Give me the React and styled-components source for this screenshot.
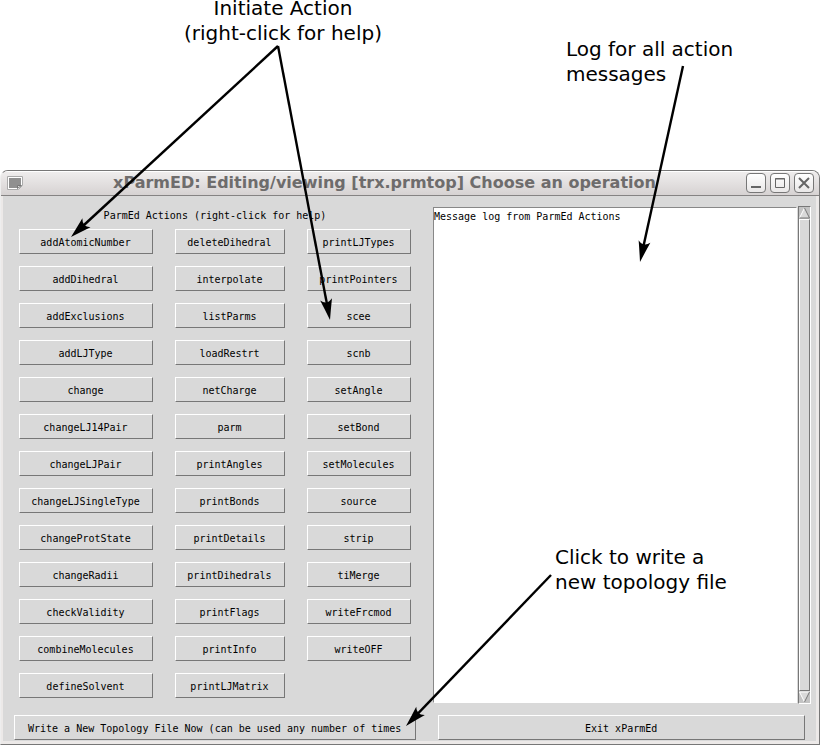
import React from 'react';
import styled, { createGlobalStyle } from 'styled-components';

const GlobalStyle = createGlobalStyle`
  *, *::before, *::after { box-sizing: border-box; }
  body { margin: 0; background: #fff; color: #000; overflow-x: hidden; }
  button, textarea { font: 10px/13px "DejaVu Sans Mono", "Liberation Mono", monospace; color: #000; }
`;

const face = '#d9d9d9';

const Page = styled.main`
  position: relative;
  font: 10px/13px "DejaVu Sans Mono", "Liberation Mono", monospace;
`;

const Notes = styled.header`
  display: flex;
  align-items: flex-start;
  height: 170px;
  padding-left: 184px;
  gap: 184px;
`;

const Note = styled.p`
  margin: ${(p) => p.$top || 0}px 0 0;
  font: 20px/25px "DejaVu Sans", sans-serif;
  text-align: ${(p) => p.$align || 'left'};
  white-space: pre;
`;

const FloatingNote = styled(Note)`
  position: absolute;
  left: 555px;
  top: 545px;
`;

const Annotations = styled.svg`
  position: absolute;
  top: 0;
  left: 0;
  pointer-events: none;
`;

const Window = styled.section`
  margin-right: 2px;
  border: 1px solid #777;
  border-left-color: #eee;
  border-radius: 8px 8px 0 0;
  background: #ece9e8;
  overflow: hidden;
`;

const TitleBar = styled.div`
  display: flex;
  align-items: center;
  height: 25px;
  padding: 0 5px 0 6px;
  border-bottom: 1px solid #858383;
  background: linear-gradient(#fff 1px, #efeded 1px, #d6d2d2);
`;

const Title = styled.h1`
  flex: 1;
  margin: 0;
  font: bold 16px/20px "DejaVu Sans", sans-serif;
  color: #6e6c6c;
  text-align: center;
  white-space: nowrap;
`;

const MenuButton = styled.button`
  display: flex;
  padding: 0;
  border: 0;
  background: none;
`;

const Controls = styled.div`
  display: flex;
  gap: 4px;
`;

const ControlButton = styled.button`
  display: flex;
  align-items: center;
  justify-content: center;
  width: 20px;
  height: 20px;
  padding: 0;
  border: 1px solid #777;
  border-radius: 4px;
  background: linear-gradient(#fff, #e9e7e7);
`;

const Body = styled.div`
  margin: 0 3px 3px 2px;
  padding-top: 11px;
  background: ${face};
`;

const Panels = styled.div`
  display: flex;
  padding-right: 5px;
`;

const ActionPanel = styled.div`
  padding: 0 22px 5px 16px;
`;

const ActionTitle = styled.h2`
  margin: 2px 0 7px;
  font: inherit;
  text-align: center;
`;

const ActionGrid = styled.div`
  display: grid;
  grid-template-columns: 134px 110px 104px;
  grid-template-rows: repeat(13, 25px);
  grid-auto-flow: column;
  gap: 12px 22px;
`;

const TkButton = styled.button`
  height: 25px;
  flex: ${(p) => (p.$grow ? '1' : 'none')};
  padding: 2px ${(p) => p.$pad || 12}px 0 ${(p) => (p.$pad || 12) - 1}px;
  border: 1px solid;
  border-color: #fff #777 #777 #fff;
  border-radius: 0;
  background: ${face};
  white-space: nowrap;
`;

const Log = styled.textarea`
  flex: 1;
  min-width: 0;
  margin: 0;
  padding: 2px 0 0;
  border: 1px solid;
  border-color: #888 #fff #fff #888;
  border-radius: 0;
  background: #fff;
  resize: none;
  outline: none;
`;

const Scrollbar = styled.div`
  display: flex;
  flex-direction: column;
  width: 13px;
  margin: -1px 0 -1px 1px;
  border: 1px solid;
  border-color: #777 #fff #fff #777;
  background: #c3c3c3;
`;

const ScrollButton = styled.button`
  display: flex;
  padding: 0;
  border: 0;
  background: none;
`;

const Thumb = styled.div`
  flex: 1;
  border: 1px solid;
  border-color: #fff #777 #777 #fff;
  background: ${face};
`;

const Footer = styled.footer`
  display: flex;
  gap: 22px;
  padding: 12px 11px 1px;
`;

const columns = [
  ['addAtomicNumber', 'addDihedral', 'addExclusions', 'addLJType', 'change', 'changeLJ14Pair', 'changeLJPair',
    'changeLJSingleType', 'changeProtState', 'changeRadii', 'checkValidity', 'combineMolecules', 'defineSolvent'],
  ['deleteDihedral', 'interpolate', 'listParms', 'loadRestrt', 'netCharge', 'parm', 'printAngles',
    'printBonds', 'printDetails', 'printDihedrals', 'printFlags', 'printInfo', 'printLJMatrix'],
  ['printLJTypes', 'printPointers', 'scee', 'scnb', 'setAngle', 'setBond', 'setMolecules',
    'source', 'strip', 'tiMerge', 'writeFrcmod', 'writeOFF'],
];

const arrows = [
  { from: [278, 46], to: [71, 237] },
  { from: [278, 46], to: [330, 320] },
  { from: [683, 66], to: [640, 262] },
  { from: [551, 575], to: [406, 726] },
];

function Arrow({ from, to }) {
  const dx = to[0] - from[0];
  const dy = to[1] - from[1];
  const length = Math.hypot(dx, dy);
  const angle = (Math.atan2(dy, dx) * 180) / Math.PI;
  return (
    <g transform={`translate(${from[0]} ${from[1]}) rotate(${angle})`}>
      <path d={`M0 0H${length - 14}`} stroke="#000" strokeWidth="2.4" />
      <path d={`M${length} 0Q${length - 11} -3 ${length - 21} -6Q${length - 15} 0 ${length - 21} 6Q${length - 11} 3 ${length} 0Z`} />
    </g>
  );
}

export default function App() {
  return (
    <Page>
      <GlobalStyle />
      <Notes>
        <Note $align="center" $top={-4}>{'Initiate Action\n(right-click for help)'}</Note>
        <Note $top={37}>{'Log for all action\nmessages'}</Note>
      </Notes>

      <Window>
        <TitleBar>
          <MenuButton aria-label="Window menu">
            <svg width="16" height="14" viewBox="0 0 16 14">
              <path d="M.5.5h15v9l-4 4H.5z" fill="#fff" stroke="#aaa" />
              <path d="M2 2h12v7l-3 3H2z" fill="#909090" />
              <path d="M10.5 12.5v-3h4z" fill="#ddd" stroke="#777" />
            </svg>
          </MenuButton>
          <Title>xParmED: Editing/viewing [trx.prmtop] Choose an operation</Title>
          <Controls>
            <ControlButton aria-label="Minimize">
              <svg width="18" height="18"><path d="M4 13h10" stroke="#666" strokeWidth="2" /></svg>
            </ControlButton>
            <ControlButton aria-label="Maximize">
              <svg width="18" height="18"><path d="M4.5 4.5h9v9h-9zM4 5h10" fill="none" stroke="#666" /></svg>
            </ControlButton>
            <ControlButton aria-label="Close">
              <svg width="18" height="18"><path d="M4 4l10 10M14 4L4 14" stroke="#666" strokeWidth="2" /></svg>
            </ControlButton>
          </Controls>
        </TitleBar>

        <Body>
          <Panels>
            <ActionPanel>
              <ActionTitle>ParmEd Actions (right-click for help)</ActionTitle>
              <ActionGrid>
                {columns.flat().map((name) => <TkButton key={name}>{name}</TkButton>)}
              </ActionGrid>
            </ActionPanel>
            <Log aria-label="Message log" readOnly defaultValue="Message log from ParmEd Actions" />
            <Scrollbar>
              <ScrollButton aria-label="Scroll up">
                <svg width="11" height="12">
                  <path d="M5.5 1L10.5 11H.5z" fill={face} />
                  <path d="M5.5 1L.5 11" stroke="#fff" />
                  <path d="M5.5 1l5 10H.5" fill="none" stroke="#777" />
                </svg>
              </ScrollButton>
              <Thumb />
              <ScrollButton aria-label="Scroll down">
                <svg width="11" height="12">
                  <path d="M.5 1h10l-5 10z" fill={face} />
                  <path d="M5.5 11L.5 1h10" fill="none" stroke="#fff" />
                  <path d="M10.5 1l-5 10" stroke="#777" />
                </svg>
              </ScrollButton>
            </Scrollbar>
          </Panels>
          <Footer>
            <TkButton $pad={14}>Write a New Topology File Now (can be used any number of times</TkButton>
            <TkButton $grow>Exit xParmEd</TkButton>
          </Footer>
        </Body>
      </Window>

      <FloatingNote>{'Click to write a\nnew topology file'}</FloatingNote>
      <Annotations width="822" height="747" aria-hidden="true">
        {arrows.map((a) => <Arrow key={a.to.join()} {...a} />)}
      </Annotations>
    </Page>
  );
}
